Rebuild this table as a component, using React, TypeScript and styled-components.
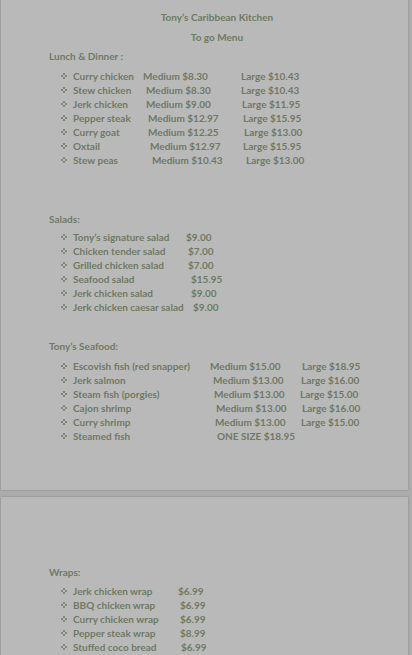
import React from 'react';
import styled, { createGlobalStyle } from 'styled-components';

const GlobalStyle = createGlobalStyle`
  html, body {
    margin: 0;
    padding: 0;
    background: #acacac;
  }
  body {
    font-family: Lato, "Open Sans", sans-serif;
    overflow: hidden;
  }
`;

interface SizedItem {
  name: string;
  med: string;
  medX: number;
  large?: string;
  largeX?: number;
}

interface PricedItem {
  name: string;
  price: string;
  priceX: number;
}

const lunch: SizedItem[] = [
  { name: 'Curry chicken', med: 'Medium $8.30', medX: 143, large: 'Large $10.43', largeX: 241 },
  { name: 'Stew chicken', med: 'Medium $8.30', medX: 146, large: 'Large $10.43', largeX: 241 },
  { name: 'Jerk chicken', med: 'Medium $9.00', medX: 146, large: 'Large $11.95', largeX: 242 },
  { name: 'Pepper steak', med: 'Medium $12.97', medX: 148, large: 'Large $15.95', largeX: 243 },
  { name: 'Curry goat', med: 'Medium $12.25', medX: 148, large: 'Large $13.00', largeX: 244 },
  { name: 'Oxtail', med: 'Medium $12.97', medX: 150, large: 'Large $15.95', largeX: 243 },
  { name: 'Stew peas', med: 'Medium $10.43', medX: 152, large: 'Large $13.00', largeX: 246 },
];

const salads: PricedItem[] = [
  { name: 'Tony’s signature salad', price: '$9.00', priceX: 186 },
  { name: 'Chicken tender salad', price: '$7.00', priceX: 188 },
  { name: 'Grilled chicken salad', price: '$7.00', priceX: 188 },
  { name: 'Seafood salad', price: '$15.95', priceX: 191 },
  { name: 'Jerk chicken salad', price: '$9.00', priceX: 191 },
  { name: 'Jerk chicken caesar salad', price: '$9.00', priceX: 193 },
];

const seafood: SizedItem[] = [
  { name: 'Escovish fish (red snapper)', med: 'Medium $15.00', medX: 210, large: 'Large $18.95', largeX: 302 },
  { name: 'Jerk salmon', med: 'Medium $13.00', medX: 213, large: 'Large $16.00', largeX: 301 },
  { name: 'Steam fish (porgies)', med: 'Medium $13.00', medX: 214, large: 'Large $15.00', largeX: 300 },
  { name: 'Cajon shrimp', med: 'Medium $13.00', medX: 216, large: 'Large $16.00', largeX: 302 },
  { name: 'Curry shrimp', med: 'Medium $13.00', medX: 215, large: 'Large $15.00', largeX: 301 },
  { name: 'Steamed fish', med: 'ONE SIZE $18.95', medX: 217 },
];

const wraps: PricedItem[] = [
  { name: 'Jerk chicken wrap', price: '$6.99', priceX: 178 },
  { name: 'BBQ chicken wrap', price: '$6.99', priceX: 180 },
  { name: 'Curry chicken wrap', price: '$6.99', priceX: 180 },
  { name: 'Pepper steak wrap', price: '$8.99', priceX: 180 },
  { name: 'Stuffed coco bread', price: '$6.99', priceX: 181 },
];

// x where item names begin on the page
const NAME_X = 73;

const Viewer = styled.div`
  display: flex;
  flex-direction: column;
  gap: 7px;
  padding: 0 4px 0 1px;
  color: #6f7a63;
  font-size: 10px;
  font-weight: 700;
  line-height: 14px;
`;

const Page = styled.div<{ $height: number; $pad?: number }>`
  height: ${({ $height }) => $height}px;
  padding: ${({ $pad = 0 }) => $pad}px 23px 0 48px;
  background: #b9b9b9;
  box-shadow: 0 0 2px rgba(0, 0, 0, 0.25);
  box-sizing: border-box;
`;

const Title = styled.div<{ $top: number }>`
  text-align: center;
  margin-top: ${({ $top }) => $top}px;
`;

const Section = styled.section<{ $top: number }>`
  margin-top: ${({ $top }) => $top}px;
`;

const Heading = styled.div<{ $gap?: number }>`
  margin-bottom: ${({ $gap = 6 }) => $gap}px;
`;

const List = styled.ul`
  list-style: none;
  margin: 0;
  padding: 0 0 0 12px;
`;

const Row = styled.li`
  display: flex;
  align-items: center;
  white-space: nowrap;
`;

const Bullet = styled.svg`
  width: 6px;
  height: 6px;
  margin-right: 6px;
  flex: none;
`;

const Cell = styled.span<{ $w?: number }>`
  flex: none;
  width: ${({ $w }) => ($w ? `${$w}px` : 'auto')};
`;

const Star = () => (
  <Bullet viewBox="0 0 6 6">
    <g fill="#6f7a63">
      <circle cx="3" cy="1" r="1" />
      <circle cx="3" cy="5" r="1" />
      <circle cx="1" cy="3" r="1" />
      <circle cx="5" cy="3" r="1" />
    </g>
  </Bullet>
);

const SizedRow = ({ item }: { item: SizedItem }) => (
  <Row>
    <Star />
    <Cell $w={item.medX - NAME_X}>{item.name}</Cell>
    <Cell $w={item.largeX ? item.largeX - item.medX : undefined}>{item.med}</Cell>
    {item.large && <Cell>{item.large}</Cell>}
  </Row>
);

const PricedRow = ({ item }: { item: PricedItem }) => (
  <Row>
    <Star />
    <Cell $w={item.priceX - NAME_X}>{item.name}</Cell>
    <Cell>{item.price}</Cell>
  </Row>
);

const App: React.FC = () => (
  <>
    <GlobalStyle />
    <Viewer>
      <Page $height={490}>
        <Title $top={10}>Tony’s Caribbean Kitchen</Title>
        <Title $top={6}>To go Menu</Title>
        <Section $top={5}>
          <Heading>Lunch &amp; Dinner :</Heading>
          <List>
            {lunch.map(i => <SizedRow key={i.name} item={i} />)}
          </List>
        </Section>
        <Section $top={45}>
          <Heading $gap={4}>Salads:</Heading>
          <List>
            {salads.map(i => <PricedRow key={i.name} item={i} />)}
          </List>
        </Section>
        <Section $top={25}>
          <Heading>Tony’s Seafood:</Heading>
          <List>
            {seafood.map(i => <SizedRow key={i.name} item={i} />)}
          </List>
        </Section>
      </Page>
      <Page $height={400} $pad={68}>
        <Section $top={0}>
          <Heading $gap={5}>Wraps:</Heading>
          <List>
            {wraps.map(i => <PricedRow key={i.name} item={i} />)}
          </List>
        </Section>
      </Page>
    </Viewer>
  </>
);

export default App;
